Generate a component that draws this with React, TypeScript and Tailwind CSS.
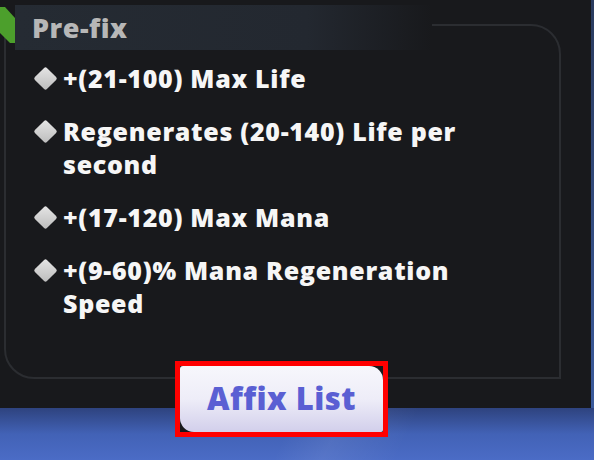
import type { ReactNode } from 'react';

const affixes: string[][] = [
  ['+(21-100) Max Life'],
  ['Regenerates (20-140) Life per', 'second'],
  ['+(17-120) Max Mana'],
  ['+(9-60)% Mana Regeneration', 'Speed'],
];

function Diamond() {
  return (
    <span className="flex h-[33px] w-[26px] shrink-0 items-center justify-center">
      <span className="block h-[17px] w-[17px] rotate-45 rounded-[2px] bg-gradient-to-br from-[#e6e6e6] to-[#bcbcbc]" />
    </span>
  );
}

function AffixRow({ lines }: { lines: string[] }): ReactNode {
  return (
    <li className="flex gap-[5px]">
      <Diamond />
      <p className="text-[25px] font-extrabold leading-[33px] tracking-[0.7px] text-[#f6f6f6]">
        {lines.map((line, i) => (
          <span key={i} className="block">
            {line}
          </span>
        ))}
      </p>
    </li>
  );
}

function GreenTab() {
  return (
    <div className="mt-[2px] h-[36px] w-[15px] shrink-0">
      <svg viewBox="0 0 15 36" className="h-full w-full" preserveAspectRatio="none">
        <path d="M0 0 H5 L15 11 V36 H10 L0 26 Z" fill="#4c9f2c" />
      </svg>
    </div>
  );
}

export default function App() {
  return (
    <div
      className="relative flex h-[460px] w-[594px] flex-col overflow-hidden bg-[#18191c]"
      style={{ fontFamily: '"Open Sans", "Liberation Sans", sans-serif' }}
    >
      <div className="flex h-[408px] w-full shrink-0">
        <div className="relative h-full w-[591px] bg-[#18191c] pl-[4px] pt-[24px]">
          {/* frame */}
          <div className="h-[355px] w-[557px] rounded-tr-[30px] rounded-bl-[30px] border-2 border-[#2b2d31] pl-[26px] pt-[36px]">
            <ul className="flex flex-col gap-[20px]">
              {affixes.map((lines, i) => (
                <AffixRow key={i} lines={lines} />
              ))}
            </ul>
          </div>

          {/* header over the frame top */}
          <div className="absolute left-0 top-[5px] flex h-[45px] w-[432px] items-start">
            <GreenTab />
            <div className="flex h-full flex-1 items-center bg-gradient-to-r from-[#252b33] via-[#232830] via-70% to-[#18191c] pl-[17px]">
              <span className="text-[27px] font-extrabold leading-none tracking-[0.5px] text-[#b7b7b7]">Pre-fix</span>
            </div>
          </div>
        </div>
        <div className="h-full w-[3px] bg-gradient-to-b from-[#2a3b5e] to-[#3a5a9c]" />
      </div>

      {/* blue strip with a diagonal sheen */}
      <div className="relative flex-1 bg-gradient-to-b from-[#2e437f] via-[#4262b6] via-50% to-[#4b6cc6]">
        <div className="h-full w-full bg-[linear-gradient(115deg,transparent_0%,transparent_48%,rgba(255,255,255,0.07)_56%,transparent_68%)]" />
      </div>

      {/* highlighted button */}
      <div className="absolute left-[175px] top-[361px] border-[5px] border-[#ff0000] bg-[#18191c]">
        <button
          type="button"
          className="flex h-[66px] w-[203px] items-center justify-center rounded-tl-[3px] rounded-tr-[14px] rounded-bl-[14px] rounded-br-[2px] bg-gradient-to-b from-[#f7f7fc] via-[#eeedf8] to-[#d2cfeb] pb-[2px]"
        >
          <span className="text-[31px] font-extrabold leading-none tracking-[0.5px] text-[#5a5fd3]">Affix List</span>
        </button>
      </div>
    </div>
  );
}
